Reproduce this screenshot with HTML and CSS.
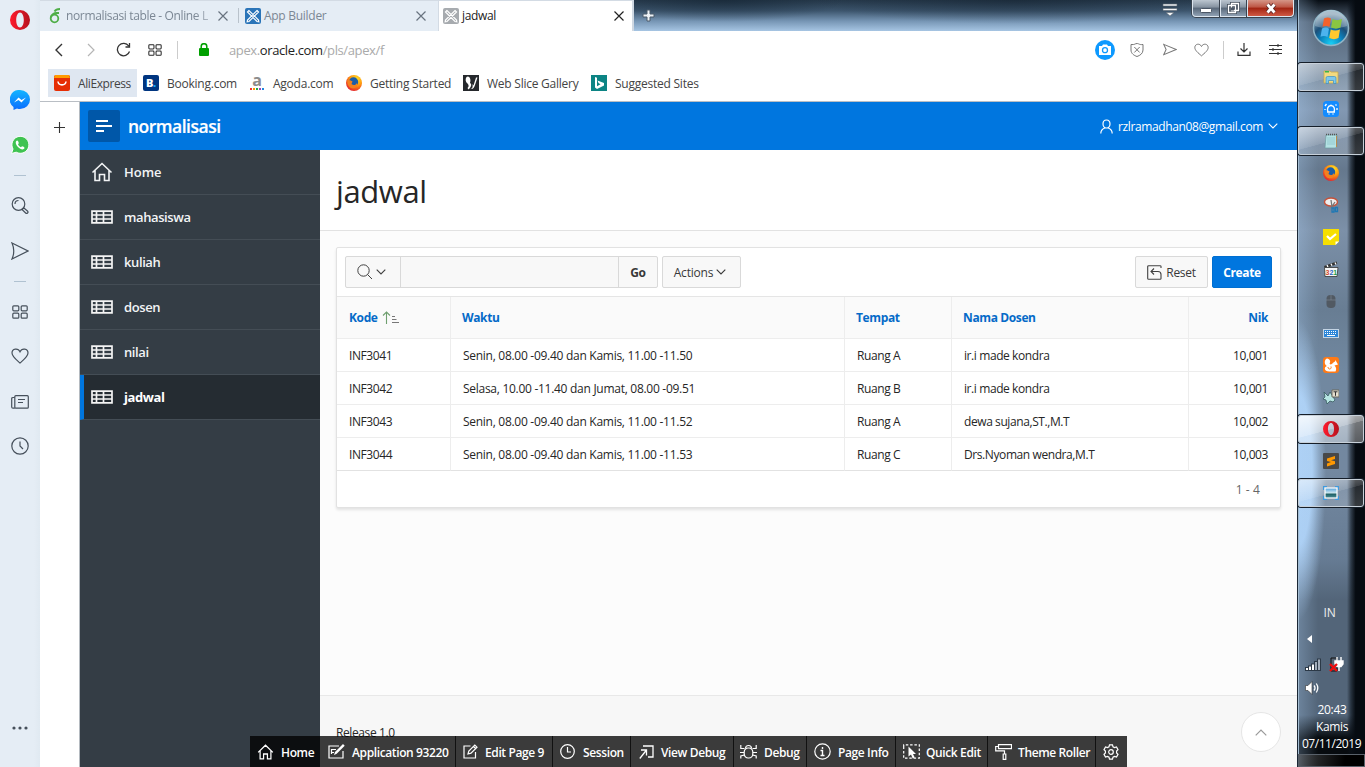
FILE: index.html
```html
<!DOCTYPE html>
<html lang="id">
<head>
<meta charset="utf-8">
<title>jadwal</title>
<link rel="stylesheet" href="styles.css">
</head>
<body>
<svg class="defs" width="0" height="0">
  <defs>
    <linearGradient id="gOpera" x1="0" x2="1"><stop offset="0" stop-color="#ff1b2d"/><stop offset="1" stop-color="#b5121d"/></linearGradient>
    <linearGradient id="gMsg" x1="0" y1="0" x2="0" y2="1"><stop offset="0" stop-color="#12b5ff"/><stop offset="1" stop-color="#0a6cff"/></linearGradient>
    <radialGradient id="gOrb" cx=".5" cy=".95" r=".85"><stop offset="0" stop-color="#17d0f5"/><stop offset=".4" stop-color="#0b7fba"/><stop offset=".65" stop-color="#1d4f78"/><stop offset="1" stop-color="#8fa9bb"/></radialGradient>
    <radialGradient id="gFox" cx=".65" cy=".25" r=".8"><stop offset="0" stop-color="#ffe226"/><stop offset=".5" stop-color="#ff980e"/><stop offset="1" stop-color="#e3202e"/></radialGradient>
    <linearGradient id="gPic" x1="0" y1="0" x2="0" y2="1"><stop offset="0" stop-color="#4f9fdc"/><stop offset=".5" stop-color="#cfe8ee"/><stop offset=".6" stop-color="#1d5f63"/><stop offset="1" stop-color="#4d8f9b"/></linearGradient>
  </defs>
  <symbol id="table" viewBox="0 0 22 14"><path d="M1 1.200h20v11.600H1zM1 5h20M1 9h20M5.500 1v12M12.500 1v12" fill="none" stroke="#f4f4f4" stroke-width="1.700"/></symbol>
  <symbol id="home" viewBox="0 0 22 20"><path d="M1.500 10.500 11 1.500l9.500 9M4 8.500v10h4.500v-6h5v6H18v-10" fill="none" stroke="currentColor" stroke-width="1.600"/></symbol>
  <symbol id="close" viewBox="0 0 12 12"><path d="M1.500 1.500l9 9M10.500 1.500l-9 9" fill="none" stroke="currentColor" stroke-width="1.200"/></symbol>
  <symbol id="apex" viewBox="0 0 16 16"><rect width="16" height="16" rx="2" fill="currentColor"/><path d="M4 2.500 2.500 4l9.500 9.500 1.800.3-.3-1.800zM12 2.500 13.500 4 4 13.500l-1.800.3.3-1.800z" fill="none" stroke="#fff" stroke-width="1.200"/></symbol>
  <symbol id="heart" viewBox="0 0 18 16"><path d="M9 15C5 11.500 1 8.500 1 5c0-4.500 6-5.500 8-1.200C11-.5 17 .5 17 5c0 3.500-4 6.500-8 10z" fill="none" stroke="currentColor" stroke-width="1.200"/></symbol>
  <symbol id="send" viewBox="0 0 18 18"><path d="M1 1l16 8L1 17q3.500-8 0-16z" fill="none" stroke="currentColor" stroke-width="1.200"/></symbol>
  <symbol id="grid" viewBox="0 0 16 14"><g fill="none" stroke="currentColor" stroke-width="1.200"><rect x=".8" y=".8" width="6" height="5" rx="1"/><rect x="9.200" y=".8" width="6" height="5" rx="1"/><rect x=".8" y="8.200" width="6" height="5" rx="1"/><rect x="9.200" y="8.200" width="6" height="5" rx="1"/></g></symbol>
  <symbol id="down" viewBox="0 0 10 6"><path d="M.7.700 5 5 9.300.700" fill="none" stroke="currentColor" stroke-width="1.100"/></symbol>
  <symbol id="opera" viewBox="0 0 20 20"><path fill="url(#gOpera)" fill-rule="evenodd" d="M10 0a10 10 0 1 0 0 20 10 10 0 0 0 0-20zm0 2.500c2.200 0 3.800 3.300 3.800 7.500s-1.600 7.500-3.800 7.500S6.200 14.200 6.200 10 7.800 2.500 10 2.500z"/></symbol>
  <symbol id="fox" viewBox="0 0 16 16"><circle cx="8" cy="8" r="8" fill="url(#gFox)"/><circle cx="7.500" cy="7" r="4.700" fill="#1c5da8"/><path d="M1.500 4.500c2 1 3 .5 5 2l-1 2.500c2 2 4.500 1 5.500-1 1 4-2 5.500-4.500 5.200C3 13 .8 9 1.500 4.500z" fill="#f4801f"/></symbol>
</svg>

<div class="desktop">
  <aside class="dock">
    <svg class="dk dk-opera" width="20" height="20"><use href="#opera"/></svg>
    <svg class="dk dk-msg" width="20" height="20" viewBox="0 0 20 20"><path d="M10 0a10 9.500 0 0 1 0 19c-1 0-2-.1-3-.5L3.500 20v-3A9.500 9.500 0 0 1 10 0z" fill="url(#gMsg)"/><path d="M4 12.500 8.500 7.500l3 2.500L16 7.500l-4.500 5-3-2.500z" fill="#fff"/></svg>
    <svg class="dk dk-wa" width="18" height="18" viewBox="0 0 18 18"><path d="M.5 17.500 2 13a8.500 8.500 0 1 1 3.200 3.200z" fill="#3fc351" stroke="#fff"/><path d="M6 4.500c-2 1-1.500 4 1 6.500s5.500 3.500 6.500 1c.3-1-2.200-2-2.500-1.800l-1 1C8.500 10.500 7.500 9.500 7 8.200l.8-1C7.800 6.500 7 4.500 6 4.500z" fill="#fff"/></svg>
    <i class="dash"></i>
    <svg class="dk dk-search" width="18" height="18" viewBox="0 0 18 18"><g fill="none" stroke="#46505b" stroke-width="1.200"><circle cx="7.500" cy="7" r="6.300"/><path d="M4 7a3.500 3.500 0 0 1 3.500-3.500M11 12.500l1.700-1.700 4 3.500c1 1-.8 2.800-1.800 1.900z"/></g></svg>
    <svg class="dk dk-send" width="18" height="18"><use href="#send"/></svg>
    <i class="dash dash-2"></i>
    <svg class="dk dk-grid" width="16" height="14"><use href="#grid"/></svg>
    <svg class="dk dk-heart" width="18" height="16"><use href="#heart"/></svg>
    <svg class="dk dk-news" width="18" height="14" viewBox="0 0 18 14"><g fill="none" stroke="currentColor" stroke-width="1.200"><rect x="3.800" y=".7" width="13.500" height="12.500" rx="1"/><path d="M3.800 13.200H2c-.8 0-1.300-.4-1.300-1.200V3.500c0-.7.500-1 1.300-1h1.800M7 4.500h7M7 7.500h5"/></g></svg>
    <svg class="dk dk-clock" width="18" height="18" viewBox="0 0 18 18"><g fill="none" stroke="currentColor" stroke-width="1.200"><circle cx="9" cy="9" r="8.200"/><path d="M9 4.500V9l3 3"/></g></svg>
    <svg class="dk dk-more" width="16" height="4" viewBox="0 0 16 4"><g fill="currentColor"><circle cx="2" cy="2" r="1.600"/><circle cx="8" cy="2" r="1.600"/><circle cx="14" cy="2" r="1.600"/></g></svg>
  </aside>

  <div class="browser">
    <div class="tabstrip">
      <div class="tab">
        <svg width="14" height="16" viewBox="0 0 14 16"><g fill="none" stroke="#4fae47" stroke-width="1.800"><ellipse cx="5.500" cy="10.500" rx="3.800" ry="3.800"/><path d="M1.700 9.500C2 6.500 5 5 7.500 5H10M5.500 3.500C6.500 1.500 8.500 1 11 1"/></g></svg>
        <span class="tab-name tab-long">normalisasi table - Online L</span>
        <svg class="tab-x" width="12" height="12"><use href="#close"/></svg>
      </div>
      <div class="tab tab-sep">
        <svg class="ap-blue" width="16" height="16"><use href="#apex"/></svg>
        <span class="tab-name tab-app">App Builder</span>
        <svg class="tab-x" width="12" height="12"><use href="#close"/></svg>
      </div>
      <div class="tab tab-on">
        <svg class="ap-gray" width="16" height="16"><use href="#apex"/></svg>
        <span class="tab-name">jadwal</span>
        <svg class="tab-x" width="12" height="12"><use href="#close"/></svg>
      </div>
      <div class="glass">
        <svg width="13" height="13" viewBox="0 0 13 13"><path d="M5 1h3v4h4v3H8v4H5V8H1V5h4z" fill="#eef2f6" stroke="#4b5a6a"/></svg>
        <div class="winctl">
          <svg class="tabmenu" width="16" height="14" viewBox="0 0 16 14"><path d="M1 1h14v2H1zM1 5.500h14v2H1zM4 9.500h8L8 13z" fill="#f3f5f8" stroke="#5c6670" stroke-width=".6"/></svg>
          <span class="wbtn wmin"><svg width="12" height="5" viewBox="0 0 12 5"><rect x=".5" y=".5" width="11" height="4" rx="1" fill="#fff" stroke="#4b5665"/></svg></span>
          <span class="wbtn wmax"><svg width="13" height="12" viewBox="0 0 13 12"><path d="M4.500 1.500h7v7h-7zM1.500 3.500h7v7h-7z" fill="#74849a" stroke="#444f5d" stroke-width="3"/><path d="M4.500 1.500h7v7h-7zM1.500 3.500h7v7h-7z" fill="none" stroke="#fff" stroke-width="1.300"/><path d="M4 5.500h3v3H4z" fill="#4a5665"/></svg></span>
          <span class="wbtn wclose"><svg width="12" height="11" viewBox="0 0 12 11"><path d="M2.500 1.500l7 8M9.500 1.500l-7 8" stroke="#5e2a2a" stroke-width="4.500"/><path d="M2.500 1.500l7 8M9.500 1.500l-7 8" stroke="#fff" stroke-width="2.800"/></svg></span>
        </div>
      </div>
    </div>

    <div class="address">
      <svg class="back" width="8" height="14" viewBox="0 0 8 14"><path d="M7 1 1 7l6 6" fill="none" stroke="#333" stroke-width="1.400"/></svg>
      <svg class="fwd" width="8" height="14" viewBox="0 0 8 14"><path d="M1 1l6 6-6 6" fill="none" stroke="#b5b5b5" stroke-width="1.200"/></svg>
      <svg class="reload" width="15" height="15" viewBox="0 0 15 15"><path d="M13.500 9.500A6.200 6.200 0 1 1 12.700 4M13.500 1v4h-4" fill="none" stroke="#333" stroke-width="1.300"/></svg>
      <svg class="speed" width="14" height="12"><use href="#grid"/></svg>
      <i class="vbar"></i>
      <svg class="lock" width="10" height="13" viewBox="0 0 10 13"><rect y="5" width="10" height="8" rx="1" fill="#00a000"/><path d="M2.200 6V3.500a2.800 2.800 0 0 1 5.600 0V6" fill="none" stroke="#00a000" stroke-width="1.500"/></svg>
      <span class="url">apex.<b>oracle.com</b>/pls/apex/f</span>
      <div class="addr-tools">
        <svg width="20" height="20" viewBox="0 0 20 20"><circle cx="10" cy="10" r="10" fill="#0d99ff"/><path d="M4 6h3l1-1.500h4L13 6h3v9H4z" fill="#fff"/><circle cx="10" cy="10.200" r="2.500" fill="#fff" stroke="#0d99ff" stroke-width="1.300"/></svg>
        <svg class="t-shield" width="14" height="14" viewBox="0 0 14 14"><path d="M1 1.500C5 2 5 .5 7 .5s2 1.500 6 1V7c0 3.500-3 5.500-6 6.500C4 12.500 1 10.500 1 7zM4.300 4l5.400 5.500M9.700 4 4.300 9.500" fill="none" stroke="#777"/></svg>
        <svg class="t-send" width="14" height="13" viewBox="0 0 18 18" preserveAspectRatio="none"><path d="M1 2l16 7L1 16l3-7z" fill="none" stroke="#777" stroke-width="1.300"/></svg>
        <svg class="t-heart" width="15" height="14"><use href="#heart"/></svg>
        <i class="vbar"></i>
        <svg class="t-dl" width="14" height="13" viewBox="0 0 14 13"><path d="M7 0v9M3.500 5.500 7 9l3.500-3.500M1 8.500v3.800h12V8.500" fill="none" stroke="#333" stroke-width="1.200"/></svg>
        <svg class="t-set" width="13" height="11" viewBox="0 0 13 11"><path d="M0 1.500h13M0 5.500h13M0 9.500h13M9 0v3M4 4v3M9 8v3" stroke="#333" stroke-width="1.100"/></svg>
      </div>
    </div>

    <div class="bookmarks">
      <span class="bm bm-on"><svg width="16" height="16" viewBox="0 0 16 16"><rect width="16" height="16" rx="2" fill="#e62e04"/><path d="M1 0h14l1 3H0z" fill="#ff9a00"/><path d="M4 6.500c.5 4.500 7.500 4.500 8 0" fill="none" stroke="#fff" stroke-width="1.600"/></svg><span>AliExpress</span></span>
      <span class="bm bm-book"><span class="fav fav-b">B<em>.</em></span><span>Booking.com</span></span>
      <span class="bm bm-ago"><span class="fav fav-a">a<svg width="14" height="2" viewBox="0 0 14 2"><path d="M0 0h2v2H0z" fill="#e33"/><path d="M3 0h2v2H3z" fill="#f90"/><path d="M6 0h2v2H6z" fill="#2a4"/><path d="M9 0h2v2H9z" fill="#94b"/><path d="M12 0h2v2h-2z" fill="#28d"/></svg></span><span>Agoda.com</span></span>
      <span class="bm bm-get"><svg width="16" height="16"><use href="#fox"/></svg><span>Getting Started</span></span>
      <span class="bm bm-web"><svg width="16" height="16" viewBox="0 0 16 16"><path d="M0 0h16v16H0z" fill="#25282c"/><path d="M3.500 2c2.500-2 5 2 3.500 6 2 1 1.500 4-1.500 6.500L4.500 13c1.500-1 1.500-3 0-4.500C2.500 7 2 4 3.500 2zM7.500 14c2-.5 2.500-2 2-5l1 1.500L13 2.500h1.500L12 10c-1 3-2 4.500-4.500 4z" fill="#fff"/></svg><span>Web Slice Gallery</span></span>
      <span class="bm bm-sug"><svg width="16" height="16" viewBox="0 0 16 16"><path d="M0 0h16v16H0z" fill="#0c8484"/><path d="M4 2l2 .7v8.500l3.500-2L7.500 8l-1-2.500L13 8v2.500L6 14l-2-1.500z" fill="#fff"/></svg><span>Suggested Sites</span></span>
    </div>

    <div class="viewport">
      <div class="pane"><svg width="11" height="11" viewBox="0 0 11 11"><path d="M5.500 0v11M0 5.500h11" stroke="#333" stroke-width="1.100"/></svg></div>
      <div class="app">
        <header class="app-head">
          <span class="burger"><svg width="16" height="12" viewBox="0 0 16 12"><path d="M0 1h12M0 6h16M0 11h8" stroke="#fff" stroke-width="1.800"/></svg></span>
          <span class="logo">normalisasi</span>
          <span class="user"><svg width="13" height="15" viewBox="0 0 13 15"><path d="M6.500 1C4 1 3 2.800 3 5s1.500 4 3.500 4S10 7.200 10 5 9 1 6.500 1zM.8 14.500c0-3 1.200-4.500 4-5.500M12.200 14.500c0-3-1.200-4.500-4-5.500" fill="none" stroke="#fff" stroke-width="1.200"/></svg><span class="mail">rzlramadhan08@gmail.com</span><svg width="10" height="6"><use href="#down"/></svg></span>
        </header>
        <div class="app-body">
          <nav class="nav">
            <a><svg width="22" height="20"><use href="#home"/></svg><span>Home</span></a>
            <a><svg width="22" height="14"><use href="#table"/></svg><span>mahasiswa</span></a>
            <a><svg width="22" height="14"><use href="#table"/></svg><span>kuliah</span></a>
            <a><svg width="22" height="14"><use href="#table"/></svg><span>dosen</span></a>
            <a><svg width="22" height="14"><use href="#table"/></svg><span>nilai</span></a>
            <a class="nav-on"><svg width="22" height="14"><use href="#table"/></svg><span>jadwal</span></a>
          </nav>
          <main class="main">
            <div class="title"><h1>jadwal</h1></div>
            <section class="report">
              <div class="toolbar">
                <div class="search">
                  <span class="s-btn"><svg width="16" height="16" viewBox="0 0 16 16"><g fill="none" stroke="#404040"><circle cx="6.500" cy="6.500" r="5.700"/><path d="M10.500 10.500 15 15"/></g></svg><svg width="10" height="6"><use href="#down"/></svg></span>
                  <span class="s-field"></span>
                  <span class="s-go">Go</span>
                </div>
                <span class="btn actions"><span>Actions</span><svg width="10" height="6"><use href="#down"/></svg></span>
                <span class="btn reset"><svg width="15" height="15" viewBox="0 0 15 15"><g fill="none" stroke="#404040" stroke-width="1.100"><path d="M14 3V1.500C14 1 13.700.700 13 .700H1.700C1 .700.700 1 .700 1.500v12c0 .5.300.8 1 .8H13c.7 0 1-.3 1-.8V9.500C14 7.500 13 6.500 11 6.500H4M7 3.500l-3 3 3 3"/></g></svg><span>Reset</span></span>
                <span class="btn create">Create</span>
              </div>
              <table class="grid">
                <colgroup><col class="c1"><col class="c2"><col class="c3"><col class="c4"><col></colgroup>
                <thead><tr><th class="first">Kode<svg class="sort" width="17" height="13" viewBox="0 0 17 13"><path d="M4.500 13V1M1 4.500 4.500 1 8 4.500" fill="none" stroke="#6f9f6f" stroke-width="1.100"/><path d="M10 5.500h3M10 8.500h4.500M10 11.500h7" stroke="#777"/></svg></th><th>Waktu</th><th>Tempat</th><th>Nama Dosen</th><th class="num">Nik</th></tr></thead>
                <tbody>
                  <tr><td>INF3041</td><td class="when">Senin, 08.00 -09.40 dan Kamis, 11.00 -11.50</td><td>Ruang A</td><td>ir.i made kondra</td><td class="num">10,001</td></tr>
                  <tr><td>INF3042</td><td class="when">Selasa, 10.00 -11.40 dan Jumat, 08.00 -09.51</td><td>Ruang B</td><td>ir.i made kondra</td><td class="num">10,001</td></tr>
                  <tr><td>INF3043</td><td class="when">Senin, 08.00 -09.40 dan Kamis, 11.00 -11.52</td><td>Ruang A</td><td>dewa sujana,ST.,M.T</td><td class="num">10,002</td></tr>
                  <tr><td>INF3044</td><td class="when">Senin, 08.00 -09.40 dan Kamis, 11.00 -11.53</td><td>Ruang C</td><td>Drs.Nyoman wendra,M.T</td><td class="num">10,003</td></tr>
                </tbody>
              </table>
              <div class="pager">1 - 4</div>
            </section>
            <footer class="foot"><span class="release">Release 1.0</span><span class="top"><svg width="12" height="7" viewBox="0 0 12 7"><path d="M.7 6.300 6 1l5.300 5.300" fill="none" stroke="#999" stroke-width="1.200"/></svg></span></footer>
          </main>
        </div>
      </div>
    </div>
  </div>

  <aside class="taskbar">
    <div class="orb"><svg width="38" height="38" viewBox="0 0 38 38"><circle cx="19" cy="19" r="17.500" fill="url(#gOrb)" stroke="#8fb4c6" stroke-width="1.500"/><path d="M3 17a16 16 0 0 1 32 0c-8 3-24 3-32 0z" fill="#fff" opacity=".25"/><path d="M12 9.500c3-1.500 5-1 7 0L17.500 18c-2-1-4-1.500-7-.3z" fill="#f2622c"/><path d="M20.500 10c3 1.500 6 1.500 9.500 0L28.500 18.500c-3 1.500-6 1.500-9.500 0z" fill="#8ac641"/><path d="M10 19.500c3-1.500 5-1 7 .3L15.500 28c-2-1-4-1.500-7-.3z" fill="#4db3ee"/><path d="M18.700 20.500c3 1.300 6 1.300 9.300 0L26.500 29c-3 1.500-6 1.500-9.300 0z" fill="#ffc92e"/></svg></div>
    <div class="task task-on"><svg width="16" height="16" viewBox="0 0 16 16"><path d="M1 2h6l1 1h7v11H1z" fill="#f3da80" stroke="#c9a94d" stroke-width=".8"/><path d="M2 2h4v1.500H2z" fill="#3bb54a"/><path d="M3 14.500V9q0-1.500 1.500-1.500h7Q13 7.500 13 9v5.500h-2.500v-3h-5v3z" fill="#7ec8ec" stroke="#3c8fc0" stroke-width=".7"/></svg></div>
    <div class="task"><svg width="16" height="16" viewBox="0 0 16 16"><rect width="16" height="16" rx="3.500" fill="#148cff"/><path d="M4 11h8M5 10.500c-1-2-.5-6 3-6s4 4 3 6M7 4.500h2M5.500 13h1M9.500 13h1M2 5l1.500-2M2 9V8M14 9V7M12.500 3.500l1 1" fill="none" stroke="#fff" stroke-width="1.300"/></svg></div>
    <div class="task task-on"><svg width="16" height="16" viewBox="0 0 16 16"><path d="M3 2h11v11.500l-1.500 1.500H2z" fill="#b4e2e4" stroke="#6c9ca0" stroke-width=".7"/><path d="M13.500 3v11" stroke="#b98b4e"/><path d="M3 1.500h11" stroke="#555" stroke-width="1.500" stroke-dasharray="1 1"/><path d="M4 5h8M4 7h8M4 9h8M4 11h8" stroke="#86bfc6" stroke-width=".7"/></svg></div>
    <div class="task"><svg width="16" height="16"><use href="#fox"/></svg></div>
    <div class="task"><svg width="16" height="16" viewBox="0 0 16 16"><ellipse cx="8" cy="5" rx="6.500" ry="4" fill="#eee" stroke="#c5523a" stroke-width="1.400"/><path d="M8 3l1 7M12 5l-4 6" stroke="#777" stroke-width="1.300"/><path d="M9 11h2v4H9zM12.500 10.500h2v4h-2z" fill="none" stroke="#1f78b4" stroke-width="1.300"/></svg></div>
    <div class="task"><svg width="16" height="16" viewBox="0 0 16 16"><path d="M0 0h16v12.500L12.500 16H0z" fill="#f7df00"/><path d="M16 12.500h-3.500V16z" fill="#fff"/><path d="M4 7l3 3 6-5" fill="none" stroke="#fff" stroke-width="2.200"/></svg></div>
    <div class="task"><svg width="16" height="16" viewBox="0 0 16 16"><path d="M1 5 13.500.500l.8 2.500L2 7.500z" fill="#333"/><path d="M4 4l1 2M8 2.800l1 2M12 1.500l1 2" stroke="#fff" stroke-width="1.300"/><path d="M1.500 6.500H15l-1 9H2z" fill="#f4f5f5" stroke="#333" stroke-width=".8"/><text x="2.500" y="13.700" class="clap">3<tspan fill="#2a66c4">2</tspan><tspan fill="#259b45">1</tspan></text></svg></div>
    <div class="task"><svg width="10" height="13" viewBox="0 0 10 13"><rect x=".5" width="9" height="13" rx="4" fill="#515962"/><path d="M0 5h10M5 0v5" stroke="#7f8b98" stroke-width=".6"/></svg></div>
    <div class="task"><svg width="16" height="9" viewBox="0 0 16 9"><rect x=".5" y=".5" width="15" height="8" fill="#2d86d8" stroke="#c4d4e4"/><path d="M2 2.500h12M2 4.500h12" stroke="#fff" stroke-dasharray="1 1"/><path d="M4 6.500h8" stroke="#fff"/></svg></div>
    <div class="task"><svg width="16" height="16" viewBox="0 0 16 16"><rect width="16" height="16" rx="3" fill="#ff7a16"/><path d="M7 14.500C1 15 .5 10 4 9 1 8 1 2.500 4 1.500 7 2 8 4.500 6.500 6.500c2 2.500 3-1 5.500-2l.5-1.500 1 2 1.500 2.500-3.500 1c2 2 2 4 1 6z" fill="#fff"/><path d="M5 10c0 3 4 2.500 3-.5" fill="none" stroke="#ff7a16"/></svg></div>
    <div class="task"><svg width="16" height="16" viewBox="0 0 16 16"><path d="M1 3l4 4 2-4 5 8-2 2-3-1-3 3-1-4-3-1 2-2z" fill="#b6e6e2" stroke="#395c60" stroke-width=".8"/><path d="M9 1h7v7H9z" fill="#e4dfcf" stroke="#6d6a5f"/><path d="M10.500 2.800h4M12.500 2.800v4" stroke="#333"/></svg></div>
    <div class="task task-on task-lit"><svg width="16" height="16"><use href="#opera"/></svg></div>
    <div class="task"><svg width="16" height="16" viewBox="0 0 16 16"><rect width="16" height="16" rx="1" fill="#484848"/><path d="M4 5.500 12 3v3L8 7.300l4 1V11l-8 2.500v-3L8 9 4 8z" fill="#ff9800"/></svg></div>
    <div class="task task-on"><svg width="16" height="14" viewBox="0 0 16 14"><path d="M4 .500H.500V4M12 .500h3.500V4M.500 10v3.500H4M15.500 10v3.500H12" fill="none" stroke="#3e9be0" stroke-width="1.300"/><rect x="2" y="2" width="12" height="10" fill="url(#gPic)" stroke="#fff" stroke-width="1.200"/></svg></div>
    <div class="tray">
      <span class="lang">IN</span>
      <svg class="tr-arrow" width="5" height="8" viewBox="0 0 5 8"><path d="M5 0v8L0 4z" fill="#fff"/></svg>
      <div class="tr-row">
        <svg width="16" height="13" viewBox="0 0 16 13"><path d="M0 9h3V7.500h3V5.500h3V3h3V.500h4V13H0z" fill="#2c3947"/><path d="M1 10h2v2H1zM4 8.500h2V12H4zM7 6.500h2V12H7z" fill="#fff"/><path d="M10 4h2v8h-2zM13 1.500h2V12h-2z" fill="#a3aebb"/></svg>
        <svg width="15" height="16" viewBox="0 0 15 16"><path d="M2 2h6v13H2z" fill="#586575" stroke="#111"/><path d="M8 1v4M12 1v4M6 5h8v3l-2 2.500H8L6 8zM10 10v5" fill="#fff" stroke="#fff" stroke-width="1.400"/><path d="M1 8l7 7M8 8l-7 7" stroke="#f00c0c" stroke-width="2.300"/></svg>
      </div>
      <svg class="tr-vol" width="15" height="14" viewBox="0 0 15 14"><path d="M.500 4.500H3L7 .500v13L3 9.500H.500z" fill="#fff" stroke="#333" stroke-width=".6"/><path d="M9 4.500q2 2.500 0 5M11.300 2.500q3 4.500 0 9" fill="none" stroke="#fff" stroke-width="1.300"/></svg>
      <span class="clk clk-t">20:43</span><span class="clk clk-d">Kamis</span><span class="clk clk-y">07/11/2019</span>
      <i class="peek"></i>
    </div>
  </aside>

  <div class="devbar">
    <span class="dv d1"><svg width="17" height="16" viewBox="0 0 22 20" preserveAspectRatio="none"><use href="#home"/></svg><span>Home</span></span>
    <span class="dv d2"><svg width="17" height="15" viewBox="0 0 17 15"><path d="M11 2H1v12h14V7M3.500 5.500H8M3.500 8.500H6M3.500 5v5" fill="none" stroke="#fff" stroke-width="1.200"/><path d="M6 11l1-3 8-8 1.700 1.700-8 8z" fill="#fff"/></svg><span>Application 93220</span></span>
    <span class="dv d3"><svg width="15" height="15" viewBox="0 0 15 15"><path d="M7.500 2H1v12h11.500V8M5 10l.8-3 6-6L14 3.200l-6 6zM10.500 2.500l2 2" fill="none" stroke="#fff" stroke-width="1.200"/></svg><span>Edit Page 9</span></span>
    <span class="dv d4"><svg width="15" height="15" viewBox="0 0 15 15"><g fill="none" stroke="#fff" stroke-width="1.200"><circle cx="7.500" cy="7.500" r="6.800"/><path d="M7.500 3v5H11"/></g></svg><span>Session</span></span>
    <span class="dv d5"><svg width="15" height="14" viewBox="0 0 15 14"><path d="M4 1h10v11H9M2 5h5.500v5.500M7.500 5 .800 13.500" fill="none" stroke="#fff" stroke-width="1.300"/></svg><span>View Debug</span></span>
    <span class="dv d6"><svg width="17" height="15" viewBox="0 0 17 15"><g fill="none" stroke="#fff" stroke-width="1.200"><rect x="4.200" y="4" width="8.600" height="10" rx="4"/><path d="M5.500 4.500C5.500.500 11.500.500 11.500 4.500M.800 1v3.500h3.700M16.200 1v3.500h-3.700M0 8.500h4M13 8.500h4M.800 14.500V12L4.500 11M16.200 14.500V12l-3.700-1"/></g></svg><span>Debug</span></span>
    <span class="dv d7"><svg width="17" height="17" viewBox="0 0 17 17"><circle cx="8.500" cy="8.500" r="7.700" fill="none" stroke="#fff" stroke-width="1.200"/><path d="M8.500 4v2M6.500 7.500h2v5M6.500 12.500h4" fill="none" stroke="#fff" stroke-width="1.400"/></svg><span>Page Info</span></span>
    <span class="dv d8"><svg width="17" height="15" viewBox="0 0 17 15"><path d="M.7 3V.800h15.600v13.400H.700z" fill="none" stroke="#fff" stroke-width="1.200" stroke-dasharray="2.500 1.800"/><path d="M5.500 2.500v10l2.500-2 1.700 4 2-1-1.700-3.500h3z" fill="#fff"/></svg><span>Quick Edit</span></span>
    <span class="dv d9"><svg width="17" height="16" viewBox="0 0 17 16"><path d="M3.500.700h13v4h-13zM3.500 2.500H.700v4.300H9.500v3M8.200 10h2.600v5.300H8.200z" fill="none" stroke="#fff" stroke-width="1.200"/></svg><span>Theme Roller</span></span>
    <span class="dv d10"><svg width="16" height="16" viewBox="0 0 16 16"><g fill="none" stroke="#fff" stroke-width="1.200"><path d="M6.500.800h3l.5 2 1.500.8 2-.6 1.500 2.600-1.400 1.400v2l1.400 1.400-1.500 2.600-2-.6-1.500.8-.5 2h-3l-.5-2-1.500-.8-2 .6L1 10.400 2.400 9V7L1 5.600 2.500 3l2 .6L6 2.800z"/><circle cx="8" cy="8" r="2.300"/></g></svg></span>
  </div>
</div>
</body>
</html>
```
FILE: styles.css
```css
* { box-sizing: border-box; }
body { margin: 0; overflow: hidden; font-family: "Open Sans", "Noto Sans", sans-serif; font-size: 12px; color: #262626; }
svg { flex: none; display: block; }
.defs { position: absolute; }
.desktop { width: 1365px; height: 767px; display: grid; grid-template-columns: 40px 1257px 68px; position: relative; white-space: nowrap; }

/* Opera side dock */
.dock { background: linear-gradient(90deg, #e5edf5 34px, #e0e9f1); display: flex; flex-direction: column; align-items: center; color: #46505b; height: 767px; }
.dk-opera { margin-top: 10px; }
.dk-msg { margin-top: 60px; }
.dk-wa { margin-top: 26px; }
.dash { width: 12px; height: 1px; background: #b0c2d1; margin-top: 21px; }
.dk-search { margin-top: 21px; }
.dk-send { margin-top: 27px; }
.dash-2 { margin-top: 21px; }
.dk-grid { margin-top: 23px; }
.dk-heart { margin-top: 29px; }
.dk-news { margin-top: 31px; }
.dk-clock { margin-top: 28px; }
.dk-more { margin-top: auto; margin-bottom: 37px; }

/* browser chrome */
.browser { display: flex; flex-direction: column; height: 767px; background: #fff; min-width: 0; }
.tabstrip { height: 31px; display: flex; background: #e5edf5; }
.tab { width: 198px; display: flex; align-items: center; padding: 0 9px 1px 9px; border-top: 1px solid #d3dbe4; color: #7b8794; letter-spacing: -.2px; }
.tab-name { margin-left: 3px; flex: 1; }
.tab-long { -webkit-mask-image: linear-gradient(90deg, #000 85%, #0003); letter-spacing: -.36px; }
.tab-sep { position: relative; width: 200px; padding: 0 11px 1px 7px; }
.tab-sep::before { content: ""; position: absolute; left: 0; top: 7px; width: 1px; height: 15px; background: #b9c2cb; }
.tab-app { letter-spacing: -.28px; }
.tab-app { letter-spacing: -.28px; }
.tab-x { color: #68737f; }
.tab-on { width: 196px; background: #fff; padding: 0 7px 1px 4px; color: #222; border-right: 2px solid #cfd8e2; border-left: 1px solid #d3dbe4; letter-spacing: -.35px; }
.tab-on .tab-x { color: #222; }
.ap-blue { color: #2a74b8; }
.ap-gray { color: #a7abaf; }
.glass { flex: 1; display: flex; align-items: center; padding-left: 8px; background: radial-gradient(ellipse 120px 22px at 90px 0, #10202e88, transparent), radial-gradient(ellipse 200px 24px at 380px 0, #0b172366, transparent), linear-gradient(#26394b 0, #3d566e 35%, #7695b4 68%, #a6c5e3); }
.winctl { margin-left: auto; display: flex; height: 31px; align-items: flex-start; padding-right: 3px; }
.tabmenu { margin: 3px 14px 0 0; }
.wbtn { height: 17px; display: flex; align-items: center; justify-content: center; border: 1px solid #dce5ee; border-top: 0; background: linear-gradient(#bcc6d0, #8592a0 45%, #596879 50%, #8fa0b3); box-shadow: 0 0 0 1px #39434f; }
.wmin { width: 28px; border-radius: 0 0 0 4px; padding-top: 5px; }
.wmax { width: 27px; }
.wclose { width: 47px; border-radius: 0 0 4px 0; background: linear-gradient(#d59687, #bd5443 45%, #a12311 50%, #cf5944); }

.address { height: 38px; display: flex; align-items: center; padding: 0 0 1px 15px; }
.fwd { margin-left: 24px; }
.reload { margin-left: 21px; }
.speed { margin-left: 17px; }
.vbar { width: 1px; height: 18px; background: #ccc; margin-left: 15px; }
.lock { margin-left: 21px; }
.url { margin: 1px 0 0 20px; font-size: 13px; letter-spacing: -.38px; color: #aaa; }
.url b { font-weight: 400; color: #222; }
.addr-tools { margin-left: auto; padding-right: 15px; display: flex; align-items: center; color: #777; }
.t-shield { margin-left: 15px; }
.t-send { margin-left: 19px; }
.t-heart { margin-left: 17px; }
.addr-tools .vbar { margin-left: 14px; }
.t-dl { margin-left: 13px; }
.t-set { margin-left: 18px; }

.bookmarks { height: 33px; display: flex; padding-left: 8px; border-bottom: 1px solid #b9bec4; color: #444; }
.bm { display: flex; align-items: center; gap: 8px; height: 28px; letter-spacing: -.24px; }
.bm-on { background: #dfe7f1; width: 89px; padding-left: 6px; margin-right: 6px; letter-spacing: -.42px; }
.bm-book { width: 106px; } .bm-ago { width: 97px; } .bm-get { width: 117px; } .bm-web { width: 128px; }
.fav { width: 16px; height: 16px; font-weight: 800; text-align: center; }
.fav-b { background: #003580; color: #fff; border-radius: 2px; line-height: 16px; font-size: 11px; }
.fav-b em { color: #12a5f4; font-style: normal; }
.fav-a { color: #8d8d8d; line-height: 11px; font-size: 16px; font-weight: 700; }
.fav-a svg { margin: 2px auto 0; }

/* page */
.viewport { flex: 1; display: flex; min-height: 0; }
.pane { width: 40px; border-right: 1px solid #b4bac0; display: flex; justify-content: center; padding-top: 20px; }
.app { flex: 1; display: flex; flex-direction: column; }
.app-head { height: 48px; background: #0076df; display: flex; align-items: center; padding: 0 19px 0 8px; color: #fff; }
.burger { width: 32px; height: 32px; border-radius: 2px; background: #0057a8; display: flex; align-items: center; justify-content: center; }
.logo { margin-left: 8px; font-size: 17.5px; font-weight: 600; letter-spacing: -.5px; line-height: 24px; -webkit-text-stroke: .2px #fff; }
.user { margin-left: auto; display: flex; align-items: center; gap: 5px; padding-top: 1px; }
.user svg:last-child { margin-bottom: 2px; }
.mail { letter-spacing: -.38px; }
.app-body { flex: 1; display: flex; }
.nav { width: 240px; background: #343d45; }
.nav a { height: 45px; display: flex; align-items: center; gap: 11px; padding-left: 11px; color: #f2f4f5; border-bottom: 1px solid #444d55; font-size: 13px; font-weight: 600; letter-spacing: -.4px; }
.nav a:first-child { letter-spacing: 0; }
.nav .nav-on { background: #252c32; border-left: 4px solid #0076df; padding-left: 7px; color: #fff; font-weight: 700; letter-spacing: -.4px; }
.main { flex: 1; background: #fcfcfc; display: flex; flex-direction: column; }
.title { height: 81px; background: #fff; border-bottom: 1px solid #e2e2e2; padding: 17px 16px; }
h1 { margin: 0; font-size: 31px; line-height: 48px; font-weight: 500; letter-spacing: -.4px; }
.report { margin: 16px 16px 0; width: 945px; height: 261px; background: #fff; border: 1px solid #e2e2e2; border-radius: 2px; box-shadow: 0 2px 3px #0000001a; }
.toolbar { height: 49px; display: flex; padding: 8px; border-bottom: 1px solid #e5e5e5; }
.search { display: flex; width: 313px; height: 32px; border: 1px solid #d9d9d9; border-radius: 2px; background: #f8f8f8; }
.s-btn { width: 55px; display: flex; align-items: center; gap: 3px; padding-left: 11px; border-right: 1px solid #d9d9d9; color: #404040; }
.s-field { flex: 1; }
.s-go { width: 39px; border-left: 1px solid #d9d9d9; text-align: center; font-weight: 700; line-height: 31px; letter-spacing: -.3px; color: #383838; }
.btn { height: 32px; border: 1px solid #d9d9d9; border-radius: 2px; background: #f8f8f8; display: flex; align-items: center; justify-content: center; color: #383838; }
.actions { width: 79px; margin-left: 4px; gap: 3px; letter-spacing: -.2px; padding-right: 3px; }
.reset { width: 73px; margin-left: auto; gap: 4px; letter-spacing: -.3px; }
.create { width: 60px; margin-left: 4px; background: #0076df; border-color: #006fd1; color: #fff; font-weight: 700; letter-spacing: -.4px; }
.grid { width: 943px; border-collapse: separate; border-spacing: 0; table-layout: fixed; }
.c1 { width: 114px; } .c2 { width: 394px; } .c3 { width: 107px; } .c4 { width: 237px; }
th, td { padding: 0 12px; text-align: left; border-right: 1px solid #ededed; border-bottom: 1px solid #ededed; }
th { height: 42px; background: #fafafa; color: #056ac8; font-weight: 700; letter-spacing: -.38px; padding-left: 11px; }
.grid .first { padding-left: 12px; }
td { height: 33px; letter-spacing: -.41px; }
.when { letter-spacing: -.28px; }
tbody tr:last-child td { border-bottom-color: #e2e2e2; }
th:last-child, td:last-child { border-right: 0; }
.grid .num { text-align: right; }
.sort { display: inline-block; margin-left: 4px; vertical-align: -2px; }
.pager { text-align: right; padding-right: 20px; line-height: 37px; color: #666; letter-spacing: .1px; }
.foot { margin-top: auto; height: 72px; background: #f7f7f7; border-top: 1px solid #e8e8e8; display: flex; justify-content: space-between; align-items: center; padding: 1px 16px 0; }
.release { letter-spacing: -.4px; padding-top: 1px; }
.top { width: 40px; height: 40px; border-radius: 50%; background: #fff; border: 1px solid #e6e6e6; display: flex; align-items: center; justify-content: center; }

/* Windows taskbar */
.taskbar { height: 767px; display: flex; flex-direction: column; border-left: 1px solid #1a2634; box-shadow: inset 1px 0 #a4bdd2;
  background: linear-gradient(90deg, transparent 73%, #0a111999 79%, #060b11 86%), linear-gradient(90deg, #b4d9ff44, transparent 30%), radial-gradient(ellipse 28px 150px at 0 470px, #b4d9ffdd 50%, #b4d9ff66 75%, transparent), linear-gradient(#070d14 0, #56677a 22px, #7389a0 80px, #8298b2 110px, #65788d 170px, #7c90a8 230px, #687d93 310px, #7188a0 370px, #7388a0 470px, #667b93 560px, #536579 600px, #536579 715px, #070b0f 738px, #070b0f); }
.orb { height: 61px; padding: 9px 0 0 14px; }
.task { height: 28px; margin: 2px 1px 2px 0; display: flex; align-items: center; justify-content: center; border-radius: 3px; }
.task-on { border: 1px solid #c7d0d9; box-shadow: 0 0 0 1px #151e29; background: linear-gradient(165deg, #ffffff88, #ffffff38 50%, #ffffff22 51%, #ffffff33); }
.task-lit { background: linear-gradient(165deg, #ffffffd8, #ffffff90 50%, #ffffff70 51%, #ffffff55); }
.clap { font: 700 7px "Liberation Sans", sans-serif; fill: #d44b25; }
.tray { flex: 1; display: flex; flex-direction: column; color: #fff; margin-top: 96px; }
.lang { text-align: center; line-height: 16px; padding-right: 4px; color: #eee; letter-spacing: -.3px; }
.tr-arrow { margin: 14px 0 0 9px; }
.tr-row { display: flex; gap: 8px; margin: 13px 0 0 7px; align-items: center; }
.tr-vol { margin: 9px 0 6px 7px; }
.clk { line-height: 17px; text-align: center; letter-spacing: -.35px; }
.clk-t, .clk-d { padding-left: 1px; }
.clk-y { letter-spacing: -.45px; }
.peek { margin-top: auto; height: 13px; border: 1px solid #59616a; background: linear-gradient(100deg, #8c8c8c66, #000 70%); }

/* developer toolbar */
.devbar { position: absolute; left: 250px; top: 736px; height: 31px; width: 877px; display: flex; background: rgba(0,0,0,.76); color: #fff; font-weight: 600; letter-spacing: -.38px; }
.dv { display: flex; align-items: center; gap: 7px; padding-left: 7px; border-right: 1px solid #111; height: 31px; }
.dv > span { padding-top: 1px; }
.d1 { width: 70px; padding-left: 7px; border-right-color: transparent; } .d2 { width: 136px; padding-left: 8px; } .d3 { width: 97px; } .d4 { width: 78px; gap: 8px; } .d5 { width: 103px; padding-left: 8px; }
.d6 { width: 73px; padding-left: 6px; } .d7 { width: 89px; } .d8 { width: 92px; gap: 6px; } .d9 { width: 108px; gap: 6px; } .d10 { width: 31px; border: 0; }
```
